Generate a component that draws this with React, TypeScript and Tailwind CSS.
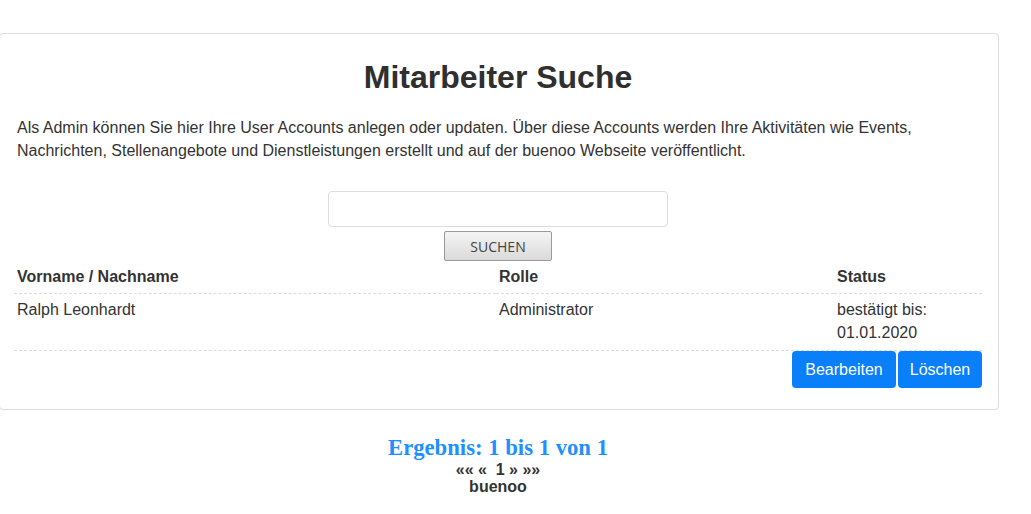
import React from 'react';

type Account = {
  name: string;
  role: string;
  status: string[];
};

const accounts: Account[] = [
  { name: 'Ralph Leonhardt', role: 'Administrator', status: ['bestätigt bis:', '01.01.2020'] },
];

const App = () => {
  return (
    <div className="min-h-screen bg-white font-['Liberation_Sans',Arial,sans-serif] text-[#333]">
      <div className="pt-[33px]">
        {/* search card */}
        <div className="ml-[-1px] w-[1000px] rounded-[4px] border border-[#dcdcdc] pr-[16px] pl-[14px] pb-[21px]">
          <h1 className="pt-[24px] text-center text-[32px] leading-[38px] font-bold text-[#2f2f2f]">
            Mitarbeiter Suche
          </h1>
          <p className="mt-[20px] px-[3px] text-[16px] leading-[23px]">
            Als Admin können Sie hier Ihre User Accounts anlegen oder updaten. Über diese Accounts werden Ihre
            Aktivitäten wie Events, Nachrichten, Stellenangebote und Dienstleistungen erstellt und auf der buenoo
            Webseite veröffentlicht.
          </p>

          <div className="mt-[29px] flex flex-col items-center">
            <input
              type="text"
              className="h-[36px] w-[340px] rounded-[4px] border border-[#dcdcdc] bg-white px-2 text-[16px] outline-none"
            />
            <button className="mt-[4px] h-[30px] w-[108px] rounded-[2px] border border-[#9a9a9a] bg-gradient-to-b from-[#f4f4f4] to-[#dadada] font-['Open_Sans',sans-serif] text-[14px] text-[#444]">
              SUCHEN
            </button>
          </div>

          <table className="mt-[1px] w-full border-collapse text-[16px]">
            <thead>
              <tr className="border-b border-dashed border-[#dcdcdc]">
                <th className="w-[482px] px-[3px] pt-[3px] pb-[5px] text-left leading-[23px] font-bold">Vorname / Nachname</th>
                <th className="w-[338px] px-[3px] pt-[3px] pb-[5px] text-left leading-[23px] font-bold">Rolle</th>
                <th className="px-[3px] pt-[3px] pb-[5px] text-left leading-[23px] font-bold">Status</th>
              </tr>
            </thead>
            <tbody>
              {accounts.map((a) => (
                <React.Fragment key={a.name}>
                  <tr className="border-b border-dashed border-[#dcdcdc] align-top">
                    <td className="px-[3px] pt-[4px] pb-[6px] leading-[23px]">{a.name}</td>
                    <td className="px-[3px] pt-[4px] pb-[6px] leading-[23px]">{a.role}</td>
                    <td className="px-[3px] pt-[4px] pb-[6px] leading-[23px]">
                      {a.status.map((s) => (
                        <div key={s}>{s}</div>
                      ))}
                    </td>
                  </tr>
                  <tr>
                    <td colSpan={3} className="p-0">
                      <div className="flex justify-end gap-[2px]">
                        <button className="h-[37px] w-[104px] rounded-[4px] bg-[#0a7ffa] text-[16px] text-white">
                          Bearbeiten
                        </button>
                        <button className="h-[37px] w-[84px] rounded-[4px] bg-[#0a7ffa] text-[16px] text-white">
                          Löschen
                        </button>
                      </div>
                    </td>
                  </tr>
                </React.Fragment>
              ))}
            </tbody>
          </table>
        </div>

        {/* result count and paging */}
        <div className="ml-[-1px] flex w-[998px] flex-col items-center pt-[25px]">
          <div className="font-['Liberation_Serif',serif] text-[22.7px] leading-[26px] font-bold text-[#1e90ff]">
            Ergebnis: 1 bis 1 von 1
          </div>
          <div className="text-[16px] leading-[17px] font-bold">
            «« « &nbsp;1 » »»
          </div>
          <div className="text-[16px] leading-[18px] font-bold">buenoo</div>
        </div>
      </div>
    </div>
  );
};

export default App;
